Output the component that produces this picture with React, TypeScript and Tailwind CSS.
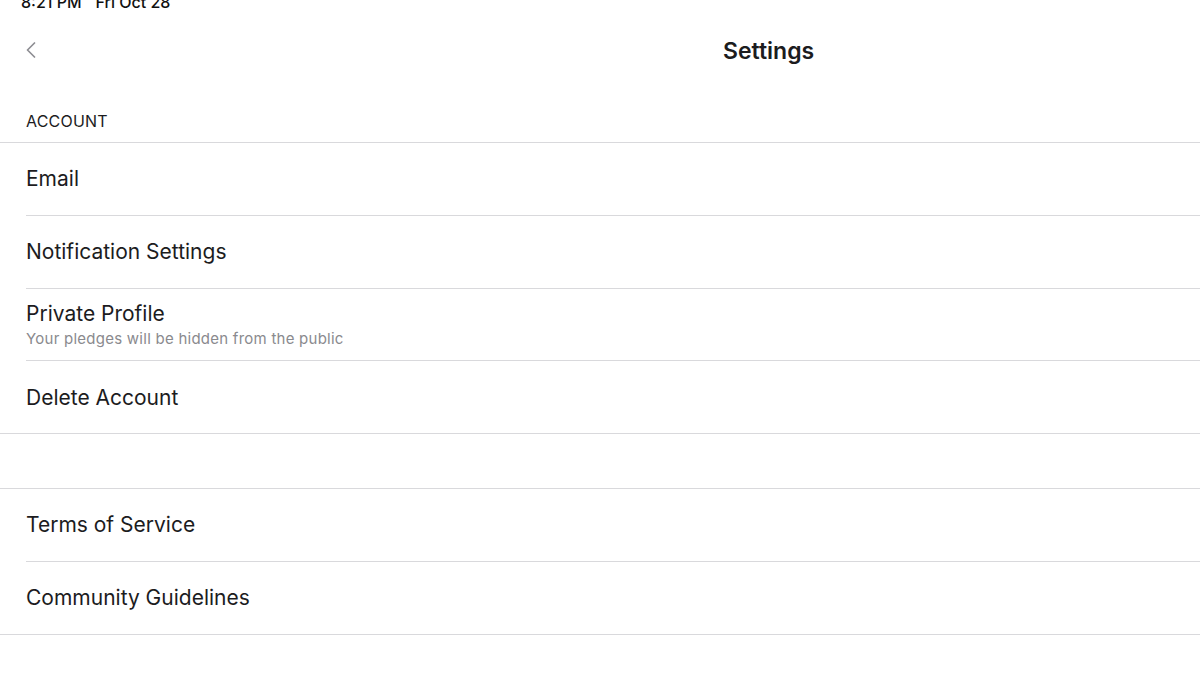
import { ChevronLeft } from 'lucide-react'

type Row = { label: string; sub?: string; full?: boolean }

const accountRows: Row[] = [
  { label: 'Email' },
  { label: 'Notification Settings' },
  { label: 'Private Profile', sub: 'Your pledges will be hidden from the public' },
  { label: 'Delete Account', full: true },
]

const legalRows: Row[] = [
  { label: 'Terms of Service' },
  { label: 'Community Guidelines', full: true },
]

function SettingsRow({ row }: { row: Row }) {
  // full-width separator sits on the outer div, inset one on the inner
  return (
    <div className={row.full ? 'border-b border-[#d9d9dc]' : 'pl-[26px]'}>
      <div
        className={`flex flex-col justify-center ${row.full ? 'h-[71.75px] pl-[26px]' : 'h-[72.75px] border-b border-[#d9d9dc]'}`}
      >
        <span className="text-[21px] leading-[25px] text-[#1c1c1e]">{row.label}</span>
        {row.sub && (
          <span className="mt-[4px] text-[15px] leading-[18px] text-[#8a8a8e] tracking-[0.25px]">{row.sub}</span>
        )}
      </div>
    </div>
  )
}

export default function App() {
  return (
    <div className="w-[1200px] h-[689px] bg-white overflow-hidden font-['Inter',sans-serif]">
      {/* Status bar — cut at the top */}
      <div className="h-[12px] overflow-hidden">
        <div className="-mt-[8px] flex gap-[14px] pl-[21px] text-[16px] leading-[20px] font-medium text-[#111]">
          <span>8:21 PM</span>
          <span>Fri Oct 28</span>
        </div>
      </div>

      {/* Nav bar */}
      <div className="h-[76px] flex items-center">
        <div className="w-[60px] pl-[17px] flex items-center text-[#8e8e93]">
          <ChevronLeft size={28} strokeWidth={1.5} />
        </div>
        <div className="flex-1 pl-[663px] text-[23px] font-semibold text-[#1c1c1e] pt-[2px]">Settings</div>
      </div>

      {/* Account section */}
      <div className="h-[55px] flex items-end pl-[26px] pb-[11px] border-b border-[#d9d9dc]">
        <span className="text-[16px] leading-[20px] text-[#1c1c1e] tracking-[0.2px]">ACCOUNT</span>
      </div>
      {accountRows.map(r => (
        <SettingsRow key={r.label} row={r} />
      ))}

      <div className="h-[55px] border-b border-[#d9d9dc]" />

      {legalRows.map(r => (
        <SettingsRow key={r.label} row={r} />
      ))}
    </div>
  )
}
